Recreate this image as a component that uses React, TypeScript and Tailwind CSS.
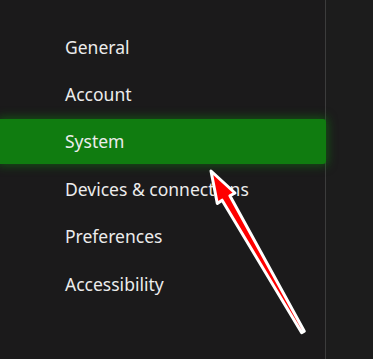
import React from 'react';

const items = ['General', 'Account', 'System', 'Devices & connections', 'Preferences', 'Accessibility'];

export default function App() {
  const selected = 'System';

  return (
    <div
      className="relative flex h-[359px] w-[373px] overflow-hidden bg-[#1b1a1b]"
      style={{ fontFamily: '"Noto Sans", "Open Sans", sans-serif' }}
    >
      {/* Settings menu */}
      <div className="flex w-[325px] flex-shrink-0 flex-col pt-[23px]">
        {items.map(item => (
          <div key={item} className="relative flex h-[47.4px] items-center">
            {item === selected && (
              <div className="absolute left-0 top-[1px] z-10 h-[45px] w-[326px] rounded-r-[3px] bg-[#107c10] shadow-[0_0_10px_2px_rgba(16,124,16,0.55)]" />
            )}
            <span className="relative z-20 pl-[65px] text-[17.5px] text-[#ececec]">{item}</span>
          </div>
        ))}
      </div>

      {/* Divider */}
      <div className="w-[1px] flex-shrink-0 bg-[#3c3c3c]" />
      <div className="flex-grow bg-[#1c1c1c]" />

      {/* Red annotation arrow */}
      <svg className="pointer-events-none absolute left-0 top-0 z-30" width="373" height="359" viewBox="0 0 373 359">
        <polygon
          points="211,171 235,193 229.9,195.8 304.3,331.3 301.7,332.7 222.1,200.2 217.3,203.5"
          fill="#ff0000"
          stroke="#ffffff"
          strokeWidth="3"
          strokeLinejoin="round"
        />
      </svg>
    </div>
  );
}
